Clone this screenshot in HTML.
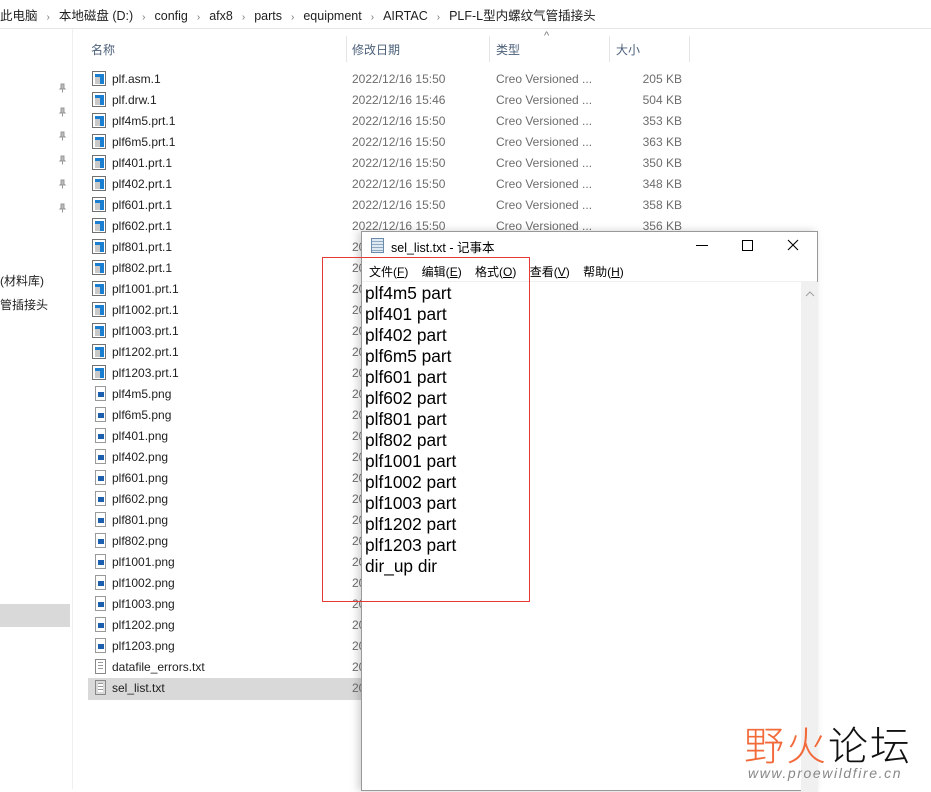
<!DOCTYPE html>
<html><head><meta charset="utf-8"><style>
*{margin:0;padding:0;box-sizing:border-box}
body{width:931px;height:789px;overflow:hidden;background:#fff;font-family:"Liberation Sans","Noto Sans CJK SC",sans-serif;font-size:12px;color:#1e1e1e;position:relative}
.a{position:absolute;white-space:nowrap}
.crumb{top:5px;left:0;font-size:12.5px;color:#1e1e1e}
.crumb span.s{color:#777;margin:0 9px;font-size:10px}
.hdr{top:41px;color:#4c607a;font-size:12px}
.row{position:absolute;left:88px;width:600px;height:21px}
.row .n{position:absolute;left:24px;top:3px}
.row .d{position:absolute;left:264px;top:3px;color:#6d6d6d}
.row .t{position:absolute;left:408px;top:3px;color:#6d6d6d}
.row .z{position:absolute;right:6px;top:3px;color:#6d6d6d}
.ic{position:absolute;left:4px;top:2px;width:14px;height:15px;border:1px solid #707070;background:#fff}
.ic:after{content:"";position:absolute;left:2px;top:2px;width:9px;height:10px;background:#c9c9c9;border-right:4px solid #1a7fd0;border-top:3px solid #1a7fd0;box-sizing:border-box}
.png{position:absolute;left:7px;top:2px;width:11px;height:15px;border:1px solid #999;background:#fff}
.png:after{content:"";position:absolute;left:2px;top:5px;width:6px;height:5px;background:#1b5fae}
.txt{position:absolute;left:7px;top:2px;width:11px;height:15px;border:1px solid #888;background:repeating-linear-gradient(#fff 0 2px,#999 2px 3px);background-clip:content-box;padding:2px 2px}
.pin{position:absolute;left:57px;width:10px;height:10px}
.np{position:absolute;left:361px;top:231px;width:457px;height:560px;background:#fff;border:1px solid #999;box-shadow:-3px 0 8px rgba(0,0,0,.18)}
.np .line{position:absolute;left:3px;font-size:17.3px;color:#000}
</style></head><body>
<div class="a crumb">此电脑<span class="s">›</span>本地磁盘 (D:)<span class="s">›</span>config<span class="s">›</span>afx8<span class="s">›</span>parts<span class="s">›</span>equipment<span class="s">›</span>AIRTAC<span class="s">›</span>PLF-L型内螺纹气管插接头</div>
<div class="a" style="left:0;top:28px;width:931px;height:1px;background:#e5e5e5"></div>
<div class="a" style="left:72px;top:29px;width:1px;height:760px;background:#efefef"></div>
<div class="a hdr" style="left:91px">名称</div>
<div class="a hdr" style="left:352px">修改日期</div>
<div class="a hdr" style="left:496px">类型</div>
<div class="a hdr" style="left:616px">大小</div>
<div class="a" style="left:544px;top:30px;color:#777;font-size:11px">^</div>
<div class="a" style="left:346px;top:36px;width:1px;height:26px;background:#e5e5e5"></div>
<div class="a" style="left:489px;top:36px;width:1px;height:26px;background:#e5e5e5"></div>
<div class="a" style="left:609px;top:36px;width:1px;height:26px;background:#e5e5e5"></div>
<div class="a" style="left:689px;top:36px;width:1px;height:26px;background:#e5e5e5"></div>
<div class="a" style="left:0;top:272px;font-size:12px">(材料库)</div>
<div class="a" style="left:0;top:296px;font-size:12px">管插接头</div>
<div class="a" style="left:0;top:604px;width:70px;height:23px;background:#d9d9d9"></div>
<div class="a" style="left:88px;top:678px;width:275px;height:22px;background:#d9d9d9"></div>
<div class="row" style="top:69px"><div class="ic"></div><div class="n">plf.asm.1</div><div class="d">2022/12/16 15:50</div><div class="t">Creo Versioned ...</div><div class="z">205 KB</div></div>
<div class="row" style="top:90px"><div class="ic"></div><div class="n">plf.drw.1</div><div class="d">2022/12/16 15:46</div><div class="t">Creo Versioned ...</div><div class="z">504 KB</div></div>
<div class="row" style="top:111px"><div class="ic"></div><div class="n">plf4m5.prt.1</div><div class="d">2022/12/16 15:50</div><div class="t">Creo Versioned ...</div><div class="z">353 KB</div></div>
<div class="row" style="top:132px"><div class="ic"></div><div class="n">plf6m5.prt.1</div><div class="d">2022/12/16 15:50</div><div class="t">Creo Versioned ...</div><div class="z">363 KB</div></div>
<div class="row" style="top:153px"><div class="ic"></div><div class="n">plf401.prt.1</div><div class="d">2022/12/16 15:50</div><div class="t">Creo Versioned ...</div><div class="z">350 KB</div></div>
<div class="row" style="top:174px"><div class="ic"></div><div class="n">plf402.prt.1</div><div class="d">2022/12/16 15:50</div><div class="t">Creo Versioned ...</div><div class="z">348 KB</div></div>
<div class="row" style="top:195px"><div class="ic"></div><div class="n">plf601.prt.1</div><div class="d">2022/12/16 15:50</div><div class="t">Creo Versioned ...</div><div class="z">358 KB</div></div>
<div class="row" style="top:216px"><div class="ic"></div><div class="n">plf602.prt.1</div><div class="d">2022/12/16 15:50</div><div class="t">Creo Versioned ...</div><div class="z">356 KB</div></div>
<div class="row" style="top:237px"><div class="ic"></div><div class="n">plf801.prt.1</div><div class="d">2022/12/16 15:50</div></div>
<div class="row" style="top:258px"><div class="ic"></div><div class="n">plf802.prt.1</div><div class="d">2022/12/16 15:50</div></div>
<div class="row" style="top:279px"><div class="ic"></div><div class="n">plf1001.prt.1</div><div class="d">2022/12/16 15:50</div></div>
<div class="row" style="top:300px"><div class="ic"></div><div class="n">plf1002.prt.1</div><div class="d">2022/12/16 15:50</div></div>
<div class="row" style="top:321px"><div class="ic"></div><div class="n">plf1003.prt.1</div><div class="d">2022/12/16 15:50</div></div>
<div class="row" style="top:342px"><div class="ic"></div><div class="n">plf1202.prt.1</div><div class="d">2022/12/16 15:50</div></div>
<div class="row" style="top:363px"><div class="ic"></div><div class="n">plf1203.prt.1</div><div class="d">2022/12/16 15:50</div></div>
<div class="row" style="top:384px"><div class="png"></div><div class="n">plf4m5.png</div><div class="d">2022/12/16 15:50</div></div>
<div class="row" style="top:405px"><div class="png"></div><div class="n">plf6m5.png</div><div class="d">2022/12/16 15:50</div></div>
<div class="row" style="top:426px"><div class="png"></div><div class="n">plf401.png</div><div class="d">2022/12/16 15:50</div></div>
<div class="row" style="top:447px"><div class="png"></div><div class="n">plf402.png</div><div class="d">2022/12/16 15:50</div></div>
<div class="row" style="top:468px"><div class="png"></div><div class="n">plf601.png</div><div class="d">2022/12/16 15:50</div></div>
<div class="row" style="top:489px"><div class="png"></div><div class="n">plf602.png</div><div class="d">2022/12/16 15:50</div></div>
<div class="row" style="top:510px"><div class="png"></div><div class="n">plf801.png</div><div class="d">2022/12/16 15:50</div></div>
<div class="row" style="top:531px"><div class="png"></div><div class="n">plf802.png</div><div class="d">2022/12/16 15:50</div></div>
<div class="row" style="top:552px"><div class="png"></div><div class="n">plf1001.png</div><div class="d">2022/12/16 15:50</div></div>
<div class="row" style="top:573px"><div class="png"></div><div class="n">plf1002.png</div><div class="d">2022/12/16 15:50</div></div>
<div class="row" style="top:594px"><div class="png"></div><div class="n">plf1003.png</div><div class="d">2022/12/16 15:50</div></div>
<div class="row" style="top:615px"><div class="png"></div><div class="n">plf1202.png</div><div class="d">2022/12/16 15:50</div></div>
<div class="row" style="top:636px"><div class="png"></div><div class="n">plf1203.png</div><div class="d">2022/12/16 15:50</div></div>
<div class="row" style="top:657px"><div class="txt"></div><div class="n">datafile_errors.txt</div><div class="d">2022/12/16 15:50</div></div>
<div class="row" style="top:678px"><div class="txt"></div><div class="n">sel_list.txt</div><div class="d">2022/12/16 15:50</div></div>
<svg class="pin" style="top:83px" viewBox="0 0 10 10"><path d="M4 1h3v4l1 1H3l1-1zM5.5 6v3.5" stroke="#999" fill="#bbb" stroke-width="1"/></svg>
<svg class="pin" style="top:107px" viewBox="0 0 10 10"><path d="M4 1h3v4l1 1H3l1-1zM5.5 6v3.5" stroke="#999" fill="#bbb" stroke-width="1"/></svg>
<svg class="pin" style="top:131px" viewBox="0 0 10 10"><path d="M4 1h3v4l1 1H3l1-1zM5.5 6v3.5" stroke="#999" fill="#bbb" stroke-width="1"/></svg>
<svg class="pin" style="top:155px" viewBox="0 0 10 10"><path d="M4 1h3v4l1 1H3l1-1zM5.5 6v3.5" stroke="#999" fill="#bbb" stroke-width="1"/></svg>
<svg class="pin" style="top:179px" viewBox="0 0 10 10"><path d="M4 1h3v4l1 1H3l1-1zM5.5 6v3.5" stroke="#999" fill="#bbb" stroke-width="1"/></svg>
<svg class="pin" style="top:203px" viewBox="0 0 10 10"><path d="M4 1h3v4l1 1H3l1-1zM5.5 6v3.5" stroke="#999" fill="#bbb" stroke-width="1"/></svg>

<div class="np">
 <div class="a" style="left:9px;top:6px;width:13px;height:15px;border:1px solid #6a8caa;background:repeating-linear-gradient(#dfe9f3 0 2px,#8fa7bf 2px 3px)"></div>
 <div class="a" style="left:29px;top:5px;font-size:12.5px;color:#000">sel_list.txt - 记事本</div>
 <div class="a" style="left:334px;top:13px;width:12px;height:1px;background:#000"></div>
 <div class="a" style="left:380px;top:8px;width:11px;height:11px;border:1px solid #000"></div>
 <svg class="a" style="left:425px;top:7px" width="12" height="12"><path d="M1 1L11 11M11 1L1 11" stroke="#000" stroke-width="1.1"/></svg>
 <div class="a" style="left:7px;top:31px;font-size:12px;color:#000">文件(<u>F</u>)&nbsp;&nbsp;&nbsp; 编辑(<u>E</u>)&nbsp;&nbsp;&nbsp; 格式(<u>O</u>)&nbsp;&nbsp;&nbsp; 查看(<u>V</u>)&nbsp;&nbsp;&nbsp; 帮助(<u>H</u>)</div>
 <div class="a" style="left:0;top:49px;width:455px;height:1px;background:#f0f0f0"></div>
 <div class="a" style="left:439px;top:50px;width:17px;height:510px;background:#f0f0f0"></div>
 <svg class="a" style="left:443px;top:59px" width="10" height="6"><path d="M1 5L5 1L9 5" stroke="#a0a0a0" fill="none"/></svg>
 <div class="line" style="top:51px">plf4m5 part</div>
 <div class="line" style="top:72px">plf401 part</div>
 <div class="line" style="top:93px">plf402 part</div>
 <div class="line" style="top:114px">plf6m5 part</div>
 <div class="line" style="top:135px">plf601 part</div>
 <div class="line" style="top:156px">plf602 part</div>
 <div class="line" style="top:177px">plf801 part</div>
 <div class="line" style="top:198px">plf802 part</div>
 <div class="line" style="top:219px">plf1001 part</div>
 <div class="line" style="top:240px">plf1002 part</div>
 <div class="line" style="top:261px">plf1003 part</div>
 <div class="line" style="top:282px">plf1202 part</div>
 <div class="line" style="top:303px">plf1203 part</div>
 <div class="line" style="top:324px">dir_up dir</div>
</div>
<div class="a" style="left:322px;top:257px;width:208px;height:345px;border:1px solid #e53935"></div>
<div class="a" style="left:744px;top:720px;font-size:40px;color:#f26a3a;font-family:'Noto Sans CJK SC',sans-serif;font-weight:300;line-height:46px;letter-spacing:2px">野火<span style="color:#111">论坛</span></div>
<div class="a" style="left:748px;top:765px;font-size:14px;color:#888;font-style:italic;letter-spacing:1.6px">www.proewildfire.cn</div>
</body></html>
